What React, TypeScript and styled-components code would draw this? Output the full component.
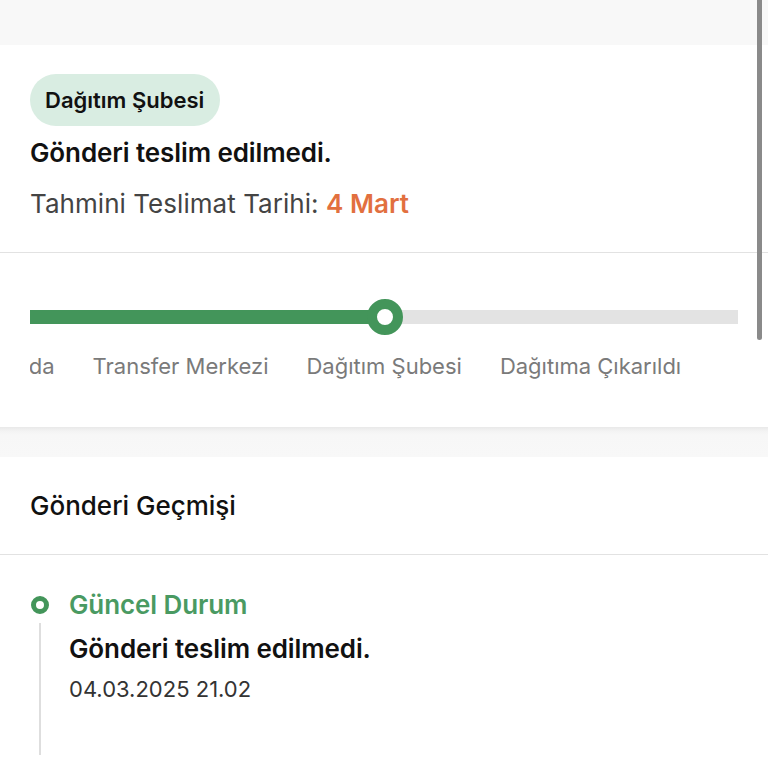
import React from "react";
import styled, { createGlobalStyle } from "styled-components";

const Global = createGlobalStyle`
  html, body { margin: 0; padding: 0; background: #ffffff; }
  body { font-family: Inter, "Noto Sans", "Liberation Sans", sans-serif; -webkit-font-smoothing: antialiased; }
  * { box-sizing: border-box; }
`;

const Page = styled.div`
  position: relative;
  width: 768px;
  height: 768px;
  overflow: hidden;
  background: #f8f8f8;
  display: flex;
  flex-direction: column;
`;

const TopBand = styled.div`
  height: 45px;
  background: #f8f8f8;
  flex-shrink: 0;
`;

const Card = styled.section`
  background: #ffffff;
  flex-shrink: 0;
`;

const StatusBlock = styled.div`
  padding: 29px 30px 0 30px;
  height: 208px;
  border-bottom: 1.5px solid #e2e2e2;
  display: flex;
  flex-direction: column;
  align-items: flex-start;
`;

const Badge = styled.span`
  display: inline-flex;
  align-items: center;
  height: 52px;
  padding: 0 16px 0 15px;
  border-radius: 26px;
  background: #d9ede2;
  color: #111;
  font-size: 22px;
  font-weight: 600;
`;

const Title = styled.div`
  margin-top: 11px;
  font-size: 26px;
  line-height: 32px;
  font-weight: 600;
  color: #111;
  letter-spacing: -0.1px;
`;

const EtaLine = styled.div`
  margin-top: 19px;
  font-size: 26px;
  line-height: 32px;
  font-weight: 400;
  color: #444;
  letter-spacing: 0.05px;
`;

const EtaDate = styled.span`
  color: #e2703f;
  font-weight: 600;
`;

const ProgressBlock = styled.div`
  height: 174px;
  padding: 45px 30px 0 30px;
`;

const Scroller = styled.div`
  overflow: hidden;
  width: 708px;
`;

const Track = styled.div`
  position: relative;
  height: 38px;
  display: flex;
  align-items: center;
`;

const Rail = styled.div`
  height: 14px;
  width: 100%;
  background: #e3e3e3;
  display: flex;
`;

const Fill = styled.div`
  height: 100%;
  background: #43955a;
`;

const Knob = styled.div`
  position: absolute;
  top: 1px;
  width: 36px;
  height: 36px;
  border-radius: 50%;
  background: #ffffff;
  border: 10px solid #43955a;
  margin-left: -18px;
`;

const Labels = styled.div`
  display: flex;
  gap: 38px;
  margin-top: 16px;
  white-space: nowrap;
`;

const StepLabel = styled.span`
  font-size: 22px;
  line-height: 28px;
  color: #7a7a7a;
  flex-shrink: 0;
`;

const Separator = styled.div`
  height: 30px;
  flex-shrink: 0;
  background: linear-gradient(#e9e9e9 0, #f3f3f3 4px, #f7f7f7 8px, #f8f8f8 100%);
`;

const HistoryHeader = styled.div`
  height: 98px;
  padding: 0 30px;
  display: flex;
  align-items: center;
  border-bottom: 1.5px solid #e2e2e2;
  font-size: 26px;
  font-weight: 500;
  color: #111;
`;

const HistoryList = styled.div`
  padding: 34px 30px 0 30px;
  height: 260px;
`;

const Event = styled.div`
  display: grid;
  grid-template-columns: 20px 1fr;
  column-gap: 19px;
`;

const Rails = styled.div`
  display: flex;
  flex-direction: column;
  align-items: center;
`;

const Dot = styled.div`
  width: 18px;
  height: 18px;
  border-radius: 50%;
  border: 5.5px solid #43955a;
  background: #fff;
  margin-top: 7px;
  flex-shrink: 0;
`;

const Line = styled.div`
  width: 2px;
  height: 132px;
  margin-top: 9px;
  background: #dedede;
`;

const EventBody = styled.div`
  display: flex;
  flex-direction: column;
`;

const EventStatus = styled.div`
  font-size: 26px;
  line-height: 32px;
  font-weight: 600;
  color: #4a9a62;
  letter-spacing: -0.1px;
`;

const EventTitle = styled.div`
  margin-top: 12px;
  font-size: 26px;
  line-height: 32px;
  font-weight: 600;
  color: #111;
  letter-spacing: -0.1px;
`;

const EventTime = styled.div`
  margin-top: 10px;
  font-size: 22px;
  line-height: 28px;
  color: #333;
`;

const ScrollIndicator = styled.div`
  position: absolute;
  top: 0;
  right: 6px;
  width: 5px;
  height: 340px;
  border-radius: 0 0 3px 3px;
  background: #8a8a8a;
`;

const steps = ["Yolda", "Transfer Merkezi", "Dağıtım Şubesi", "Dağıtıma Çıkarıldı"];

export default function App() {
  const fillWidth = 355;
  return (
    <>
      <Global />
      <Page>
        <TopBand />
        <Card>
          <StatusBlock>
            <Badge>Dağıtım Şubesi</Badge>
            <Title>Gönderi teslim edilmedi.</Title>
            <EtaLine>
              Tahmini Teslimat Tarihi: <EtaDate>4 Mart</EtaDate>
            </EtaLine>
          </StatusBlock>
          <ProgressBlock>
            <Scroller>
              <Track>
                <Rail>
                  <Fill style={{ width: fillWidth }} />
                </Rail>
                <Knob style={{ left: fillWidth }} />
              </Track>
              <Labels style={{ marginLeft: -33 }}>
                {steps.map((s) => (
                  <StepLabel key={s}>{s}</StepLabel>
                ))}
              </Labels>
            </Scroller>
          </ProgressBlock>
        </Card>
        <Separator />
        <Card>
          <HistoryHeader>Gönderi Geçmişi</HistoryHeader>
          <HistoryList>
            <Event>
              <Rails>
                <Dot />
                <Line />
              </Rails>
              <EventBody>
                <EventStatus>Güncel Durum</EventStatus>
                <EventTitle>Gönderi teslim edilmedi.</EventTitle>
                <EventTime>04.03.2025 21.02</EventTime>
              </EventBody>
            </Event>
          </HistoryList>
        </Card>
        <ScrollIndicator />
      </Page>
    </>
  );
}
